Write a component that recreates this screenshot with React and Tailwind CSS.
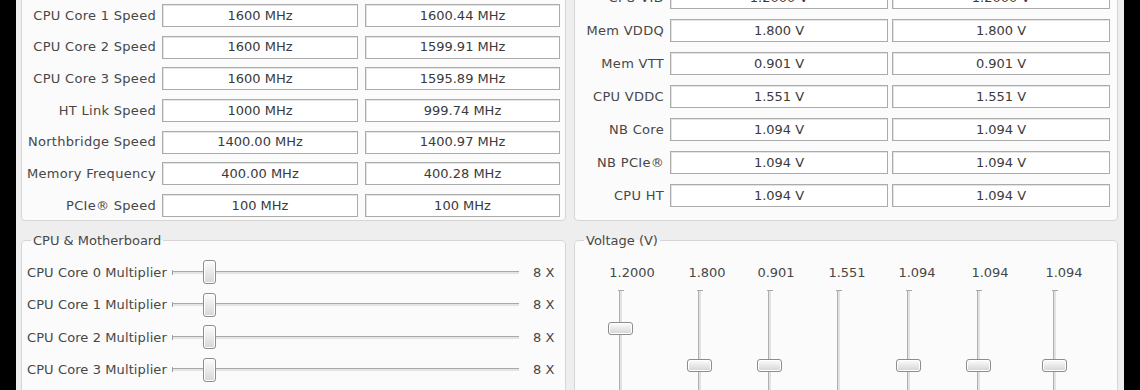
import React from "react";

const leftRows = [
  ["CPU Core 1 Speed", "1600 MHz", "1600.44 MHz"],
  ["CPU Core 2 Speed", "1600 MHz", "1599.91 MHz"],
  ["CPU Core 3 Speed", "1600 MHz", "1595.89 MHz"],
  ["HT Link Speed", "1000 MHz", "999.74 MHz"],
  ["Northbridge Speed", "1400.00 MHz", "1400.97 MHz"],
  ["Memory Frequency", "400.00 MHz", "400.28 MHz"],
  ["PCIe\u00AE Speed", "100 MHz", "100 MHz"],
];

const rightRows = [
  ["CPU VID", "1.2000 V", "1.2000 V"],
  ["Mem VDDQ", "1.800 V", "1.800 V"],
  ["Mem VTT", "0.901 V", "0.901 V"],
  ["CPU VDDC", "1.551 V", "1.551 V"],
  ["NB Core", "1.094 V", "1.094 V"],
  ["NB PCIe\u00AE", "1.094 V", "1.094 V"],
  ["CPU HT", "1.094 V", "1.094 V"],
];

const multipliers = [
  "CPU Core 0 Multiplier",
  "CPU Core 1 Multiplier",
  "CPU Core 2 Multiplier",
  "CPU Core 3 Multiplier",
];

const volts = [
  { v: "1.2000", w: "w-[75px]", ml: "ml-[23px]", top: "top-[32px]" },
  { v: "1.800", w: "w-[69px]", ml: "ml-[27px]", top: "top-[69px]" },
  { v: "0.901", w: "w-[71px]", ml: "ml-[28px]", top: "top-[69px]" },
  { v: "1.551", w: "w-[70px]", ml: "ml-[26px]", top: "top-[118px]" },
  { v: "1.094", w: "w-[73px]", ml: "ml-[26px]", top: "top-[69px]" },
  { v: "1.094", w: "w-[74px]", ml: "ml-[23px]", top: "top-[69px]" },
  { v: "1.094", w: "w-[72px]", ml: "ml-[25px]", top: "top-[69px]" },
];

function Field({ children, className }) {
  return (
    <div
      className={
        "h-[23px] shrink-0 border border-[#ababab] bg-white flex items-center justify-center text-[#3a3a3a] shadow-[inset_1px_1px_0_#e4e4e4] " +
        className
      }
    >
      {children}
    </div>
  );
}

function HThumb() {
  return (
    <div className="absolute left-[31px] top-0 w-[13px] h-[24px] rounded-[3px] border border-[#8d8d8d] bg-linear-to-b from-[#fdfdfd] to-[#d6d6d6] shadow-[inset_0_0_0_1px_#ffffff]" />
  );
}

export default function App() {
  return (
    <div className="w-[1140px] h-[390px] bg-black overflow-hidden flex font-['DejaVu_Sans',sans-serif] text-[13px] text-[#474747]">
      <div className="ml-[16px] w-[1108px] h-full bg-[#eeeeee] pl-[5px] flex flex-col">
        {/* top panels */}
        <div className="-mt-[39px] h-[260px] flex gap-[8px] shrink-0">
          <div className="w-[545px] h-full border border-[#d6d6d6] rounded-[4px] bg-[#fbfbfb] flex flex-col justify-end gap-[8.67px] pb-[3px]">
            {leftRows.map(([l, a, b]) => (
              <div key={l} className="flex items-center h-[23px]">
                <div className="w-[134px] text-right whitespace-nowrap tracking-[0.3px]">{l}</div>
                <Field className="ml-[6px] w-[196px]">{a}</Field>
                <Field className="ml-[7px] w-[195px]">{b}</Field>
              </div>
            ))}
          </div>
          <div className="w-[544px] h-full border border-[#d6d6d6] rounded-[4px] bg-[#fbfbfb] flex flex-col justify-end gap-[10px] pb-[13px]">
            {rightRows.map(([l, a, b]) => (
              <div key={l} className="flex items-center h-[23px]">
                <div className="w-[89px] text-right whitespace-nowrap tracking-[0.3px]">{l}</div>
                <Field className="ml-[6px] w-[218px]">{a}</Field>
                <Field className="ml-[4px] w-[218px]">{b}</Field>
              </div>
            ))}
          </div>
        </div>

        {/* bottom panels */}
        <div className="mt-[12px] flex gap-[8px] shrink-0">
          <fieldset className="w-[545px] h-[220px] border border-[#d6d6d6] rounded-[4px] bg-[#fbfbfb]">
            <legend className="ml-[9px] px-[2px] leading-[15px]">CPU &amp; Motherboard</legend>
            <div className="pt-[8px] flex flex-col">
              {multipliers.map((m) => (
                <div key={m} className="h-[32.5px] flex items-center">
                  <div className="pl-[5px] w-[150px] whitespace-nowrap tracking-[0.1px]">{m}</div>
                  <div className="relative w-[347px] h-[24px] flex items-center">
                    <div className="w-[1px] h-[5px] bg-[#a0a0a0]" />
                    <div className="flex-1 h-[3px] border-t border-[#a9a9a9] bg-[#e4e4e4]" />
                    <HThumb />
                  </div>
                  <div className="ml-[14px] whitespace-nowrap">8 X</div>
                </div>
              ))}
            </div>
          </fieldset>
          <fieldset className="w-[544px] h-[220px] border border-[#d6d6d6] rounded-[4px] bg-[#fbfbfb]">
            <legend className="ml-[9px] px-[2px] leading-[15px]">Voltage (V)</legend>
            <div className="pl-[21px] pt-[17px] flex">
              {volts.map((c, i) => (
                <div key={i} className={"flex-none flex flex-col " + c.w}>
                  <div className="w-[72px] text-center leading-[15px]">{c.v}</div>
                  <div className={"relative mt-[9.5px] w-[3px] h-[140px] border-l border-[#b0b0b0] bg-[#e2e2e2] " + c.ml}>
                    <div className="absolute -left-[2px] top-0 w-[6px] h-[1px] bg-[#a8a8a8]" />
                    <div
                      className={
                        "absolute -left-[12px] w-[25px] h-[13px] rounded-[3px] border border-[#8d8d8d] bg-linear-to-b from-[#fdfdfd] to-[#d4d4d4] shadow-[inset_0_0_0_1px_#ffffff] " +
                        c.top
                      }
                    />
                  </div>
                </div>
              ))}
            </div>
          </fieldset>
        </div>
      </div>
    </div>
  );
}
